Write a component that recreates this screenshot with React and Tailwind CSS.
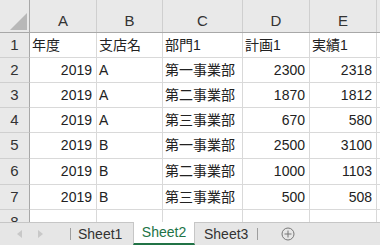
import React from 'react';

const font = "font-['Liberation_Sans','Noto_Sans_CJK_JP',sans-serif]";

// column widths incl. right border
const columns = [
    { key: 'A', w: 'w-[67px]', align: 'right' },
    { key: 'B', w: 'w-[66px]', align: 'left' },
    { key: 'C', w: 'w-[80px]', align: 'left' },
    { key: 'D', w: 'w-[67px]', align: 'right' },
    { key: 'E', w: 'w-[67px]', align: 'right' },
];

const rows = [
    ['年度', '支店名', '部門1', '計画1', '実績1'],
    ['2019', 'A', '第一事業部', '2300', '2318'],
    ['2019', 'A', '第二事業部', '1870', '1812'],
    ['2019', 'A', '第三事業部', '670', '580'],
    ['2019', 'B', '第一事業部', '2500', '3100'],
    ['2019', 'B', '第二事業部', '1000', '1103'],
    ['2019', 'B', '第三事業部', '500', '508'],
    ['', '', '', '', ''],
];

// row heights (Excel rows are ~25.3px)
const heights = ['h-[25px]', 'h-[25px]', 'h-[25px]', 'h-[25px]', 'h-[26px]', 'h-[26px]', 'h-[25px]', 'h-[25px]'];

const Cell = ({ col, value, header }) => {
    const align = header ? 'justify-start pl-[2px]' : col.align === 'right' ? 'justify-end pr-[4px]' : 'justify-start pl-[2px]';
    return (
        <div className={`${col.w} shrink-0 h-full flex items-center ${align} border-r border-b border-[#d9d9d9] text-[14px] text-[#222] whitespace-nowrap overflow-hidden`}>
            {value}
        </div>
    );
};

const App = () => {
    return (
        <div className={`w-[380px] h-[245px] flex flex-col overflow-hidden bg-white ${font}`}>
            {/* grid */}
            <div className="h-[222px] overflow-hidden flex flex-col">
                {/* column headers */}
                <div className="flex h-[33px] shrink-0 bg-[#e9e9e9] border-b border-[#a8a8a8]">
                    <div className="w-[30px] shrink-0 relative border-r border-[#a8a8a8]">
                        <svg className="absolute left-0 top-0" width="29" height="32" viewBox="0 0 29 32">
                            <polygon points="10,30 27,30 27,13" fill="#b8b8b8" />
                        </svg>
                    </div>
                    {columns.map((c) => (
                        <div key={c.key} className={`${c.w} shrink-0 flex items-center justify-center pt-[10px] border-r border-[#cfcfcf] text-[15px] text-[#333]`}>
                            {c.key}
                        </div>
                    ))}
                    <div className="flex-1" />
                </div>

                {rows.map((r, i) => (
                    <div key={i} className={`flex ${heights[i]} shrink-0`}>
                        <div className="w-[30px] shrink-0 flex items-center justify-center bg-[#e9e9e9] border-r border-b border-r-[#a8a8a8] border-b-[#cfcfcf] text-[15px] text-[#333]">
                            {i + 1}
                        </div>
                        {columns.map((c, j) => (
                            <Cell key={c.key} col={c} value={r[j]} header={i === 0} />
                        ))}
                        <div className="flex-1 border-b border-[#d9d9d9]" />
                    </div>
                ))}
            </div>

            {/* sheet tabs */}
            <div className="h-[23px] shrink-0 flex items-stretch bg-[#e6e6e6] border-t border-[#c6c6c6] text-[14px] text-[#333]">
                <div className="w-[70px] shrink-0 flex items-center gap-[14px] pl-[17px]">
                    <svg width="6" height="8" viewBox="0 0 6 8"><polygon points="5,0 5,8 0,4" fill="#c8c8c8" /></svg>
                    <svg width="6" height="8" viewBox="0 0 6 8"><polygon points="1,0 1,8 6,4" fill="#c8c8c8" /></svg>
                </div>
                <div className="w-px my-[5px] bg-[#9e9e9e]" />
                <div className="w-[62px] flex items-center pl-[7px]">Sheet1</div>
                <div className="w-[62px] flex items-center justify-center bg-white border-l border-r border-[#c6c6c6] border-b-2 border-b-[#217346] text-[#217346] -mt-px">
                    Sheet2
                </div>
                <div className="w-[62px] flex items-center pl-[9px]">Sheet3</div>
                <div className="w-px my-[5px] bg-[#9e9e9e]" />
                <div className="flex items-center pl-[23px]">
                    <svg width="14" height="14" viewBox="0 0 14 14">
                        <circle cx="7" cy="7" r="6" fill="none" stroke="#777" strokeWidth="1" />
                        <line x1="7" y1="3.5" x2="7" y2="10.5" stroke="#777" strokeWidth="1" />
                        <line x1="3.5" y1="7" x2="10.5" y2="7" stroke="#777" strokeWidth="1" />
                    </svg>
                </div>
            </div>
        </div>
    );
};

export default App;
